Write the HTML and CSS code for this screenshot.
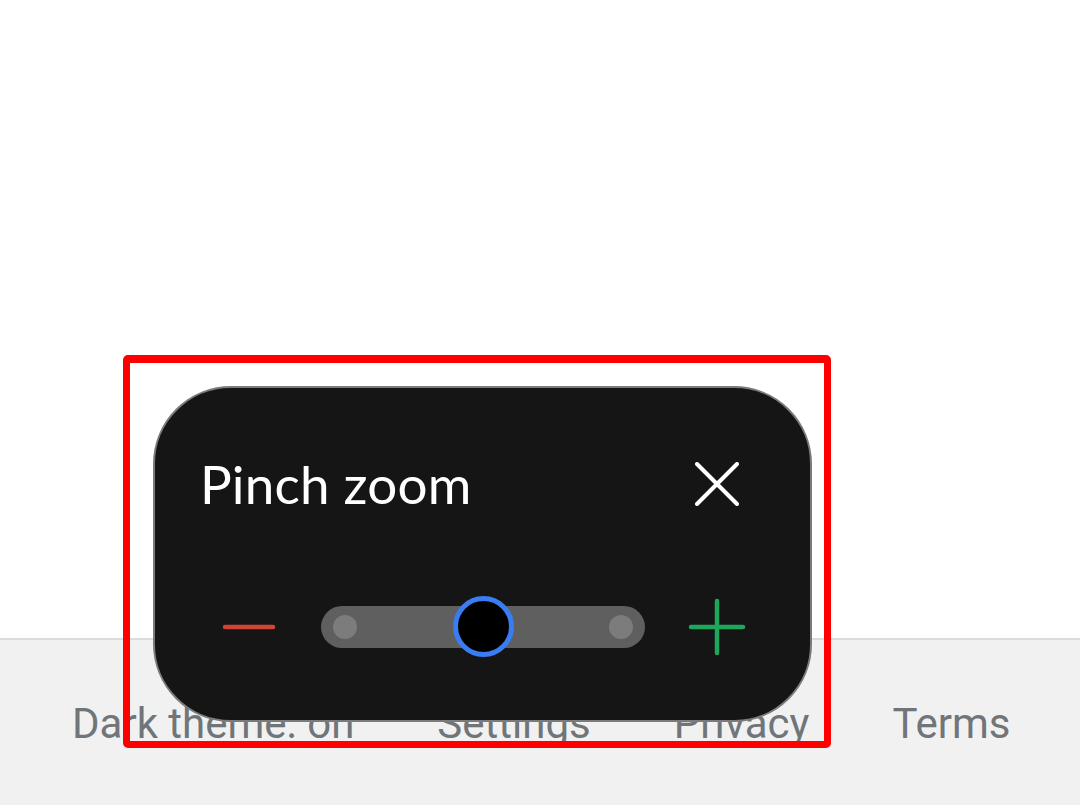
FILE: index.html
```html
<!DOCTYPE html>
<html>
<head>
<meta charset="utf-8">
<link rel="stylesheet" href="styles.css">
</head>
<body>
<div class="page">
  <main class="content"></main>
  <footer class="footer">
    <nav class="links">
      <a class="link">Dark theme: on</a>
      <a class="link">Settings</a>
      <a class="link">Privacy</a>
      <a class="link">Terms</a>
    </nav>
  </footer>

  <div class="highlight"></div>

  <section class="zoom-panel">
    <div class="title-row">
      <h1 class="title">Pinch zoom</h1>
      <button class="icon-btn" aria-label="Close">
        <svg width="44" height="44" viewBox="0 0 44 44"><path d="M2 2 L42 42 M42 2 L2 42" stroke="#ffffff" stroke-width="4" stroke-linecap="round" fill="none"/></svg>
      </button>
    </div>
    <div class="slider-row">
      <button class="icon-btn" aria-label="Zoom out">
        <svg width="56" height="56" viewBox="0 0 56 56"><path d="M4 28 H52" stroke="#cf4436" stroke-width="4.5" stroke-linecap="round"/></svg>
      </button>
      <div class="track">
        <span class="dot"></span>
        <span class="dot"></span>
        <span class="knob"></span>
      </div>
      <button class="icon-btn" aria-label="Zoom in">
        <svg width="58" height="58" viewBox="0 0 58 58"><path d="M3 29 H55 M29 3 V55" stroke="#1ea65a" stroke-width="4.5" stroke-linecap="round"/></svg>
      </button>
    </div>
  </section>
</div>
</body>
</html>
```

FILE: styles.css
```css
html, body {
  margin: 0;
  padding: 0;
  background: #ffffff;
}

.page {
  position: relative;
  width: 1080px;
  height: 805px;
  display: flex;
  flex-direction: column;
  overflow: hidden;
}

.content {
  height: 638px;
  background: #ffffff;
  flex: none;
}

.footer {
  flex: 1;
  background: #f1f1f1;
  border-top: 2px solid #dadce0;
}

.links {
  display: flex;
  gap: 83px;
  padding: 59px 0 0 72px;
}

.link {
  font-family: Roboto, "Liberation Sans", sans-serif;
  font-size: 42px;
  line-height: 49px;
  color: #70757a;
  text-decoration: none;
}

.highlight {
  position: absolute;
  left: 123px;
  top: 355px;
  width: 694px;
  height: 378px;
  border: 7px solid #ff0000;
  border-top-width: 8px;
  border-radius: 5px;
  z-index: 3;
  pointer-events: none;
}

.zoom-panel {
  position: absolute;
  left: 153px;
  top: 386px;
  width: 655px;
  height: 332px;
  box-sizing: content-box;
  background: #151515;
  border: 2px solid #7b7b7b;
  border-radius: 78px;
  z-index: 2;
  display: flex;
  flex-direction: column;
  gap: 83px;
  padding: 0;
}

.title-row {
  display: flex;
  align-items: center;
  justify-content: space-between;
  height: 60px;
  margin-top: 66px;
  padding: 0 63px 0 45px;
}

.title {
  margin: 0;
  font-family: Lato, "Noto Sans", sans-serif;
  font-weight: 400;
  font-size: 53px;
  line-height: 60px;
  color: #ffffff;
  letter-spacing: 0.2px;
}

.icon-btn {
  width: 60px;
  height: 60px;
  padding: 0;
  border: 0;
  background: transparent;
  display: flex;
  align-items: center;
  justify-content: center;
}

.slider-row {
  display: flex;
  align-items: center;
  height: 60px;
  padding: 0 0 0 64px;
  gap: 42px;
}

.track {
  position: relative;
  width: 324px;
  height: 42px;
  border-radius: 21px;
  background: #5f5f5f;
  display: flex;
  align-items: center;
  justify-content: space-between;
  padding: 0 12px;
  box-sizing: border-box;
}

.dot {
  width: 24px;
  height: 24px;
  border-radius: 50%;
  background: #7c7c7c;
}

.knob {
  position: absolute;
  left: 132px;
  top: -10px;
  width: 51px;
  height: 51px;
  border: 5px solid #3a7cf3;
  border-radius: 50%;
  background: #000000;
}
```
